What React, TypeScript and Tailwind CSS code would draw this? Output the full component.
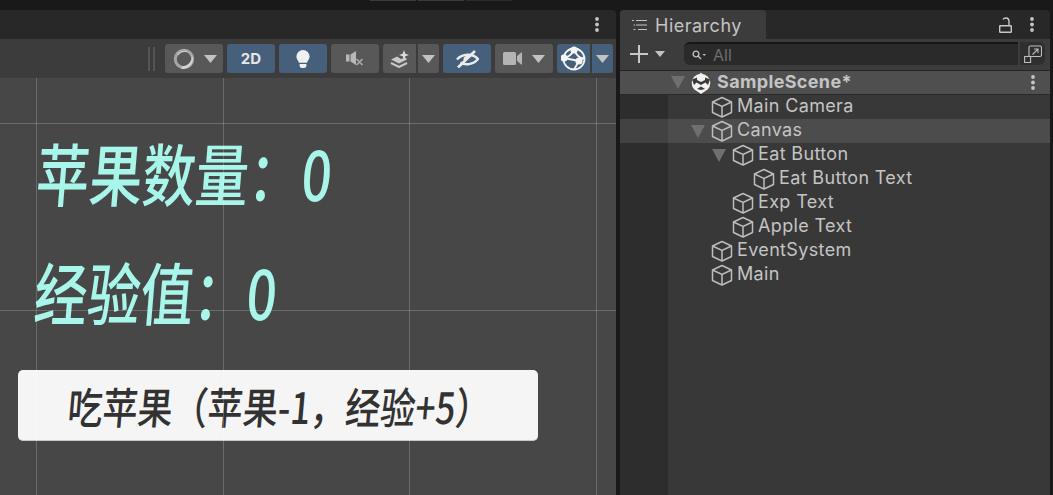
import React from "react";

const inter = "font-['Inter','Noto_Sans',sans-serif]";
const cjk = "font-['Noto_Sans_CJK_SC','Noto_Sans',sans-serif]";

type Row = { name: string; level: number; open?: boolean; hl?: boolean };

const rows: Row[] = [
  { name: "Main Camera", level: 1 },
  { name: "Canvas", level: 1, open: true, hl: true },
  { name: "Eat Button", level: 2, open: true },
  { name: "Eat Button Text", level: 3 },
  { name: "Exp Text", level: 2 },
  { name: "Apple Text", level: 2 },
  { name: "EventSystem", level: 1 },
  { name: "Main", level: 1 },
];

const indent: Record<number, string> = {
  1: "pl-[91px]",
  2: "pl-[112px]",
  3: "pl-[133px]",
};

const Caret = ({ className = "" }: { className?: string }) => (
  <svg width="13" height="8" viewBox="0 0 13 8" className={className}>
    <path d="M0 0H13L6.5 8Z" fill="#c2c2c2" />
  </svg>
);

const RowCaret = () => (
  <svg width="14" height="13" viewBox="0 0 14 13" className="shrink-0">
    <path d="M0 0H14L7 13Z" fill="#6f6f6f" />
  </svg>
);

const Cube = () => (
  <svg width="22" height="22" viewBox="0 0 22 22" className="shrink-0" fill="none" stroke="#bdbdbd" strokeWidth="1.5">
    <path d="M11 1.500 20.500 6v10.500L11 21 1.500 16.500V6Z" strokeLinejoin="round" />
    <path d="M1.500 6 11 10.500 20.500 6M11 10.500V21" />
  </svg>
);

const Kebab = () => (
  <svg width="4" height="15" viewBox="0 0 4 15">
    <circle cx="2" cy="2" r="1.900" fill="#c4c4c4" />
    <circle cx="2" cy="7.500" r="1.900" fill="#c4c4c4" />
    <circle cx="2" cy="13" r="1.900" fill="#c4c4c4" />
  </svg>
);

const UnityLogo = () => (
  <svg width="20" height="22" viewBox="0 0 20 22" className="shrink-0">
    <circle cx="10" cy="11" r="9.300" fill="#f2f2f2" />
    <path d="M10 0.500 13 4H7Z" fill="#f2f2f2" />
    <path d="M6 5.500 1 7.500 3 13 5.500 10.500 10 13 14.500 10.500 17 13 19 7.500 14 5.500 14 8 10 10 6 8Z" fill="#3a3a3a" />
    <path d="M6 17 10 14.500 14 17 10 18Z" fill="#3a3a3a" />
    <path d="M10 22 6.500 19.500H13.500Z" fill="#f2f2f2" />
  </svg>
);

const ToolButton = ({ w, blue, children }: { w: string; blue?: boolean; children?: React.ReactNode }) => (
  <div className={`${w} h-[29px] rounded-[3px] flex items-center justify-center ${blue ? "bg-[#46607c]" : "bg-[#585858]"}`}>
    {children}
  </div>
);

const Split = ({ blue, children }: { blue?: boolean; children: React.ReactNode }) => (
  <div className="flex gap-[2px]">
    <div className={`w-[33px] h-[29px] rounded-l-[3px] flex items-center justify-center ${blue ? "bg-[#46607c]" : "bg-[#585858]"}`}>
      {children}
    </div>
    <div className={`w-[21px] h-[29px] rounded-r-[3px] flex items-center justify-center ${blue ? "bg-[#46607c]" : "bg-[#585858]"}`}>
      <Caret />
    </div>
  </div>
);

const Toolbar = () => (
  <div className="h-[39px] bg-[#3c3c3c] flex items-center justify-end pr-[3px] gap-[4px]">
    <div className="flex gap-[3px] mr-[6px]">
      <div className="w-[2px] h-[24px] bg-[#555]" />
      <div className="w-[2px] h-[24px] bg-[#555]" />
    </div>
    <ToolButton w="w-[58px]">
      <div className="flex items-center gap-[9px] ml-[1px]">
        <svg width="22" height="22" viewBox="0 0 22 22" fill="none">
          <circle cx="11" cy="11" r="8.700" stroke="#a6a6a6" strokeWidth="3" />
          <path d="M18.500 6.500C20 12 16 18 9 18.500L8 21C16 22 23 14 18.500 6.500Z" fill="#d4d4d4" />
          <path d="M5 7C7 3.500 11 3 14 3.500" stroke="#c8c8c8" strokeWidth="1.200" />
        </svg>
        <Caret />
      </div>
    </ToolButton>
    <ToolButton w="w-[48px]" blue>
      <span className={`${inter} text-[15px] font-bold text-[#e6e6e6] leading-none`}>2D</span>
    </ToolButton>
    <ToolButton w="w-[48px]" blue>
      <svg width="14" height="18" viewBox="0 0 14 18">
        <path d="M7 0a6.600 6.600 0 0 1 6.600 6.600c0 2.600-1.800 3.800-2.600 6.200H3C2.200 10.400.4 9.200.4 6.600A6.600 6.600 0 0 1 7 0Z" fill="#f0f0f0" />
        <path d="M3.600 14h6.800v1.500a2.500 2.500 0 0 1-2.500 2.500H6.100a2.500 2.500 0 0 1-2.500-2.500Z" fill="#f0f0f0" />
      </svg>
    </ToolButton>
    <ToolButton w="w-[48px]">
      <svg width="18" height="15" viewBox="0 0 18 15">
        <rect x="0" y="3.500" width="3.500" height="7" fill="#b8b8b8" />
        <path d="M4.500 3.500 10 0V14L4.500 10.500Z" fill="#b8b8b8" />
        <path d="M10.500 8 16.500 14M16.500 8 10.500 14" stroke="#a8a8a8" strokeWidth="1.700" />
      </svg>
    </ToolButton>
    <Split>
      <svg width="20" height="18" viewBox="0 0 20 18" fill="none">
        <path d="M1 9.500 7 6.500 11 9 15.500 7.500 17 9.500 9 13.500Z" fill="#c8c8c8" />
        <path d="M1 13 9 17 17 13" stroke="#c8c8c8" strokeWidth="2" />
        <path d="M14 0 15.300 3.700 19 5 15.300 6.300 14 10 12.700 6.300 9 5 12.700 3.700Z" fill="#dcdcdc" />
      </svg>
    </Split>
    <ToolButton w="w-[48px]" blue>
      <svg width="23" height="18" viewBox="0 0 23 18" fill="none">
        <path d="M1 9.500C6 3.500 17 3 22 9C17 15 9 15.500 4.500 12.500" stroke="#ececec" strokeWidth="2.400" />
        <path d="M8.500 10a3.500 3.500 0 0 1 5.500-3" stroke="#ececec" strokeWidth="2.400" />
        <path d="M2 17.500 19 1" stroke="#ececec" strokeWidth="2.600" />
      </svg>
    </ToolButton>
    <ToolButton w="w-[58px]">
      <div className="flex items-center gap-[10px] mr-[1px]">
        <svg width="19" height="13" viewBox="0 0 19 13">
          <rect x="0" y="0" width="13" height="13" rx="1.500" fill="#b4b4b4" />
          <path d="M14 4 19 0V13L14 9Z" fill="#b4b4b4" />
        </svg>
        <Caret />
      </div>
    </ToolButton>
    <Split blue>
      <svg width="26" height="26" viewBox="0 0 26 26" fill="none" stroke="#f4f4f4" strokeWidth="1.800">
        <circle cx="13" cy="13" r="10.500" />
        <path d="M3 12C8 11 11 8 13 4M13 4C15 8 18 13 23 12M3 12 18 15M18 15 13 23.500M23 12 18 15" />
        <circle cx="13" cy="4" r="2.700" fill="#f4f4f4" />
        <circle cx="3" cy="12" r="2.700" fill="#f4f4f4" />
        <circle cx="18" cy="15" r="2.700" fill="#f4f4f4" />
      </svg>
    </Split>
  </div>
);

const Scene = () => (
  <div className="relative flex-1 bg-[#474747] overflow-hidden flex flex-col">
    <div className={`${cjk} pl-[37px] pt-[54px] h-[154px] text-[#a8f5ea] text-[68px] font-medium leading-[80px] whitespace-nowrap`}>
      <div className="origin-left scale-x-[0.78] -skew-x-[6deg]">苹果数量：0</div>
    </div>
    <div className={`${cjk} pl-[35px] pt-[19px] h-[138px] text-[#a8f5ea] text-[68px] font-medium leading-[80px] whitespace-nowrap`}>
      <div className="origin-left scale-x-[0.78] -skew-x-[6deg]">经验值：0</div>
    </div>
    <div className="ml-[18px] w-[520px] h-[71px] bg-[#f5f5f5] rounded-[5px] border-b border-[#c8c8c8] flex items-center pl-[50px]">
      <div className={`${cjk} origin-left scale-x-[0.815] -skew-x-[6deg] text-[#323232] text-[43px] font-medium leading-none whitespace-nowrap`}>
        吃苹果（苹果-1，经验+5）
      </div>
    </div>
    {/* grid lines sit on top of the canvas */}
    <div className="absolute top-0 bottom-0 left-[36px] w-px bg-white/20" />
    <div className="absolute top-0 bottom-0 left-[223px] w-px bg-white/20" />
    <div className="absolute top-0 bottom-0 left-[409px] w-px bg-white/20" />
    <div className="absolute top-0 bottom-0 left-[596px] w-px bg-white/20" />
    <div className="absolute left-0 right-0 top-[45px] h-px bg-white/20" />
    <div className="absolute left-0 right-0 top-[232px] h-px bg-white/20" />
  </div>
);

const Hierarchy = () => (
  <div className="flex-1 flex flex-col min-w-0">
    <div className="h-[29px] bg-[#282828] rounded-t-[4px] flex items-stretch justify-between">
      <div className="w-[146px] bg-[#3c3c3c] rounded-t-[4px] flex items-center pl-[12px] gap-[8px]">
        <svg width="15" height="12" viewBox="0 0 15 12" fill="none" stroke="#c4c4c4" strokeWidth="1.200">
          <path d="M4 1.500H15M4 6H15M6 10.500H15" />
          <path d="M0 1.500H2M1.500 6H3M1.500 10.500H3.500" />
        </svg>
        <span className={`${inter} text-[18px] text-[#c4c4c4] tracking-[0.5px] pt-[2px]`}>Hierarchy</span>
      </div>
      <div className="flex items-center gap-[18px] pr-[16px]">
        <svg width="13" height="16" viewBox="0 0 13 16" fill="none" stroke="#c8c8c8" strokeWidth="1.400">
          <path d="M4 2.500C5 .5 9.700 0 10 4V8" />
          <rect x="0.700" y="8.700" width="11.600" height="6.600" rx="0.500" />
        </svg>
        <Kebab />
      </div>
    </div>
    <div className="h-[32px] bg-[#3c3c3c] border-b border-[#232323] flex items-center pl-[10px] pb-[2px]">
      <svg width="18" height="18" viewBox="0 0 18 18">
        <path d="M9 0V18M0 9H18" stroke="#c8c8c8" strokeWidth="2" />
      </svg>
      <Caret className="ml-[7px] w-[10px]" />
      <div className="ml-[19px] w-[334px] h-[23px] bg-[#2a2a2a] border-t-2 border-[#161616] rounded-l-[6px] flex items-center pl-[8px]">
        <svg width="14" height="10" viewBox="0 0 14 10" fill="none" stroke="#c0c0c0" strokeWidth="1.400">
          <circle cx="4" cy="4" r="2.900" />
          <path d="M6 6 9 9" />
          <path d="M10.500 4H14L12.200 6Z" fill="#c0c0c0" stroke="none" />
        </svg>
        <span className={`${inter} ml-[7px] text-[16px] text-[#6e6e6e] leading-none`}>All</span>
      </div>
      <div className="ml-[2px] w-[25px] h-[23px] bg-[#2f2f2f] rounded-r-[6px] flex items-center justify-center">
        <svg width="18" height="18" viewBox="0 0 18 18" fill="none" stroke="#bdbdbd" strokeWidth="1.100">
          <path d="M5 12V2.500a1.500 1.500 0 0 1 1.500-1.500h9.500a1.500 1.500 0 0 1 1.500 1.500V10a1.500 1.500 0 0 1-1.500 1.500H7" />
          <rect x="0.600" y="11.500" width="6" height="6" />
          <path d="M8.500 9.500 14 4M10 4H14V8" />
        </svg>
      </div>
    </div>
    <div className={`${inter} flex-1 bg-[linear-gradient(90deg,#2d2d2d_48px,#383838_48px)] text-[18px] text-[#c4c4c4] tracking-[0.35px]`}>
      <div className="h-[24px] bg-[#4f4f4f] border-b border-[#2a2a2a] flex items-center pl-[51px] pr-[15px]">
        <RowCaret />
        <div className="ml-[6px]">
          <UnityLogo />
        </div>
        <span className="ml-[6px] font-bold flex-1 pb-[2px]">SampleScene*</span>
        <Kebab />
      </div>
      {rows.map((row) => (
        <div key={row.name} className={`relative h-[24px] flex items-center ${indent[row.level]} ${row.hl ? "bg-white/10" : ""}`}>
          {row.open && (
            <span className="absolute ml-[-20px]">
              <RowCaret />
            </span>
          )}
          <Cube />
          <span className="ml-[4px] whitespace-nowrap pb-[4px]">{row.name}</span>
        </div>
      ))}
    </div>
  </div>
);

export default function App() {
  return (
    <div className="w-[1053px] h-[495px] bg-[#191919] overflow-hidden flex flex-col">
      <div className="h-[10px] flex gap-[2px] pl-[370px]">
        <div className="w-[46px] h-px bg-[#3a3a3a]" />
        <div className="w-[46px] h-px bg-[#3a3a3a]" />
        <div className="w-[46px] h-px bg-[#2c2c2c]" />
      </div>
      <div className="flex-1 flex min-h-0 pr-[3px] gap-[4px]">
        <div className="w-[616px] shrink-0 flex flex-col">
          <div className="h-[29px] bg-[#282828] rounded-tr-[4px] flex items-center justify-end pr-[17px]">
            <Kebab />
          </div>
          <Toolbar />
          <Scene />
        </div>
        <Hierarchy />
      </div>
    </div>
  );
}
